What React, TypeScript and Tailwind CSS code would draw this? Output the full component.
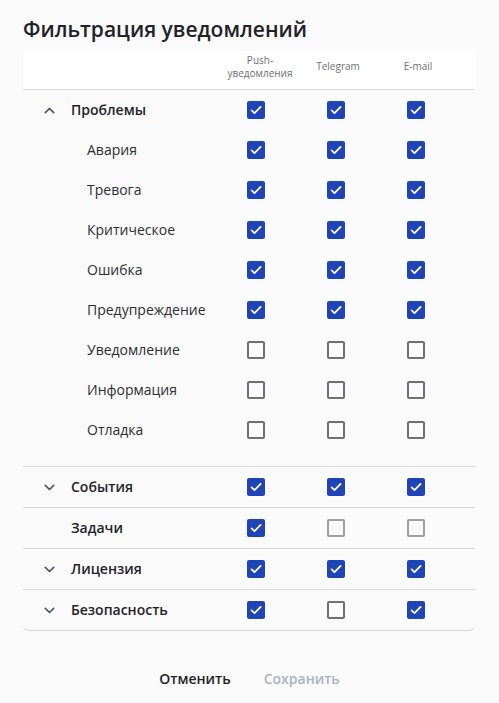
import React from "react";

type Check = "on" | "off" | "disabled";

const Checkbox = ({ state }: { state: Check }) => {
  if (state === "on") {
    return (
      <div className="w-[18px] h-[18px] rounded-[2px] bg-[#1f44b8] flex items-center justify-center">
        <svg width="14" height="14" viewBox="0 0 14 14" fill="none">
          <path
            d="M2.6 7.4l2.9 2.8L11.6 3.9"
            stroke="white"
            strokeWidth="1.8"
            strokeLinecap="round"
            strokeLinejoin="round"
          />
        </svg>
      </div>
    );
  }
  return (
    <div
      className={
        state === "disabled"
          ? "w-[18px] h-[18px] rounded-[2px] border-2 border-[#a0a0a2]"
          : "w-[18px] h-[18px] rounded-[2px] border-2 border-[#6e6e73]"
      }
    />
  );
};

const Chevron = ({ up }: { up?: boolean }) => (
  <svg width="11" height="7" viewBox="0 0 11 7" fill="none">
    <path
      d={up ? "M1.3 5.7L5.5 1.5l4.2 4.2" : "M1.3 1.3L5.5 5.5l4.2-4.2"}
      stroke="#4f5672"
      strokeWidth="1.7"
      strokeLinecap="round"
      strokeLinejoin="round"
    />
  </svg>
);

const grid = "grid grid-cols-[193px_80px_80px_80px_1fr] items-center";

const Row = ({
  label,
  checks,
  main,
  chevron,
}: {
  label: string;
  checks: Check[];
  main?: boolean;
  chevron?: "up" | "down";
}) => (
  <div className={grid + " h-10"}>
    <div className="flex items-center">
      {main ? (
        <>
          <div className="w-[48px] pl-[21px] flex items-center">
            {chevron && <Chevron up={chevron === "up"} />}
          </div>
          <span className="text-[14px] leading-[20px] -mt-[1px] font-semibold text-[#1f2329]">{label}</span>
        </>
      ) : (
        <span className="pl-[64px] text-[14px] leading-[20px] -mt-[1px] text-[#2b2e33]">{label}</span>
      )}
    </div>
    {checks.map((c, i) => (
      <div key={i} className="flex justify-center">
        <Checkbox state={c} />
      </div>
    ))}
    <div />
  </div>
);

const on: Check[] = ["on", "on", "on"];
const off: Check[] = ["off", "off", "off"];

export default function App() {
  const problems = [
    { label: "Авария", checks: on },
    { label: "Тревога", checks: on },
    { label: "Критическое", checks: on },
    { label: "Ошибка", checks: on },
    { label: "Предупреждение", checks: on },
    { label: "Уведомление", checks: off },
    { label: "Информация", checks: off },
    { label: "Отладка", checks: off },
  ];

  return (
    <div className="w-[499px] h-[703px] bg-[#fafafa] font-['Open_Sans',sans-serif] flex flex-col">
      <h1 className="px-[23px] pt-[15px] h-[51px] text-[21px] leading-[28px] font-semibold text-[#1f2329]">
        Фильтрация уведомлений
      </h1>

      <div className="mx-[23px] w-[452px] rounded-b-[6px] border-b border-[#d6d6d6]">
        <div className={grid + " h-[39px] pb-[7px] bg-white border-b border-[#d9d9d9]"}>
          <div />
          <div className="pl-2 text-center text-[10px] leading-[13px] text-[#707070]">
            Push-
            <br />
            уведомления
          </div>
          <div className="pl-1 text-center text-[10px] leading-[13px] text-[#707070]">Telegram</div>
          <div className="pl-1 text-center text-[10px] leading-[13px] text-[#707070]">E-mail</div>
          <div />
        </div>

        <div className="pb-4 border-b border-[#d9d9d9]">
          <Row label="Проблемы" checks={on} main chevron="up" />
          {problems.map((p) => (
            <Row key={p.label} label={p.label} checks={p.checks} />
          ))}
        </div>

        <div className="border-b border-[#d9d9d9]">
          <Row label="События" checks={on} main chevron="down" />
        </div>
        <div className="border-b border-[#d9d9d9]">
          <Row label="Задачи" checks={["on", "disabled", "disabled"]} main />
        </div>
        <div className="border-b border-[#d9d9d9]">
          <Row label="Лицензия" checks={on} main chevron="down" />
        </div>
        <Row label="Безопасность" checks={["on", "off", "on"]} main chevron="down" />
      </div>

      <div className="flex justify-center gap-[33px] pt-[37px]">
        <button className="text-[14px] font-semibold text-[#1f2329]">Отменить</button>
        <button className="text-[14px] font-semibold text-[#aab3c6]">Сохранить</button>
      </div>
    </div>
  );
}
